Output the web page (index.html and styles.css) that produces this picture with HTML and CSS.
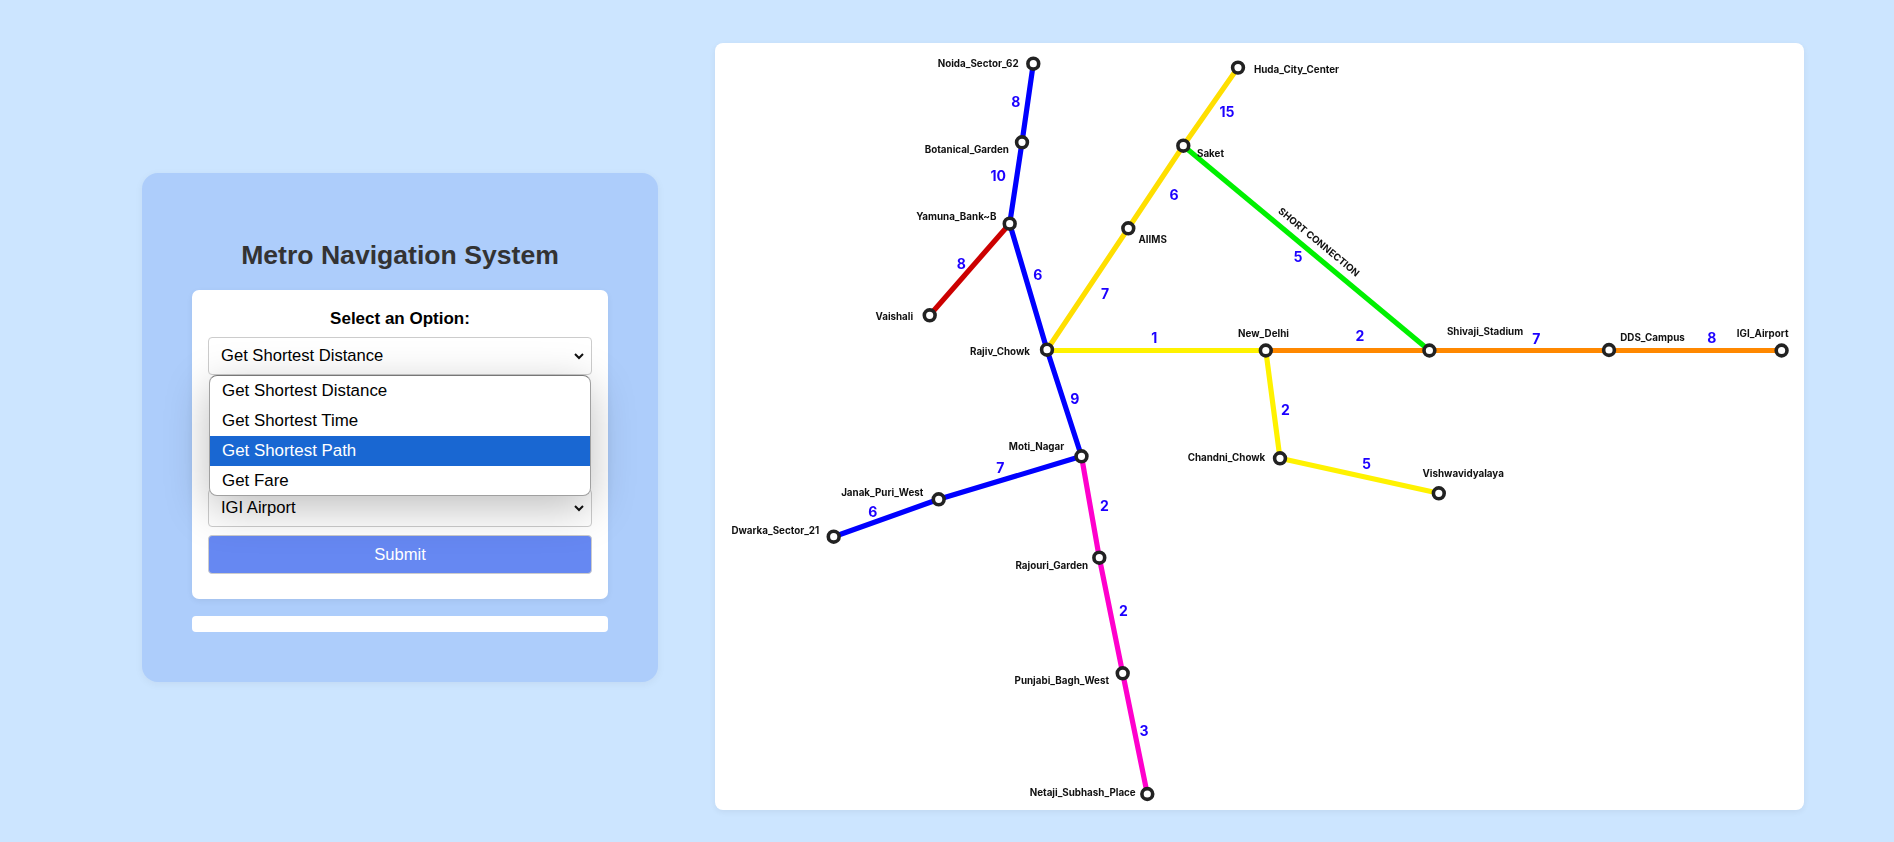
FILE: index.html
```html
<!DOCTYPE html>
<html lang="en">
<head>
    <meta charset="UTF-8">
    <meta name="viewport" content="width=device-width, initial-scale=1.0">
    <title>Metro Navigation System</title>
    <link rel="stylesheet" href="styles.css">
</head>
<body>
    <div class="page">
        <div class="panel">
            <h1>Metro Navigation System</h1>
            <form class="form-card">
                <div class="field">
                    <label for="option">Select an Option:</label>
                    <select id="option" name="option">
                        <option>Get Shortest Distance</option>
                    </select>
                    <ul class="option-menu">
                        <li>Get Shortest Distance</li>
                        <li>Get Shortest Time</li>
                        <li class="active">Get Shortest Path</li>
                        <li>Get Fare</li>
                    </ul>
                </div>
                <!-- these sit behind the open menu -->
                <div class="covered">
                    <label for="source">Source:</label>
                    <select id="source" name="source">
                        <option>Noida Sector 62</option>
                    </select>
                    <label for="destination">Destination:</label>
                </div>
                <select id="destination" name="destination">
                    <option>IGI Airport</option>
                </select>
                <button type="button">Submit</button>
            </form>
            <div class="result"></div>
        </div>

        <div class="map-card">
            <svg class="map" viewBox="715 43 1089 767">
                <!-- lines -->
                <polyline class="line blue" points="1033.3,63.7 1022,142.3 1009.7,223.7 1047,349.7 1081.5,456.3 938.7,499.3 833.7,536.7"/>
                <line class="line red" x1="1009.7" y1="223.7" x2="929.7" y2="315.3"/>
                <polyline class="line gold" points="1047,349.7 1128.3,228.3 1183.3,145.7 1238,67.6"/>
                <line class="line green" x1="1183.3" y1="145.7" x2="1429.4" y2="350.5"/>
                <polyline class="line yellow" points="1047,350.5 1265.8,350.5 1280,458.3 1438.8,493.3"/>
                <line class="line orange" x1="1265.8" y1="350.5" x2="1781.6" y2="350.5"/>
                <polyline class="line magenta" points="1081.5,456.3 1099.3,557.7 1122.7,673.3 1147.3,794"/>

                <!-- stations -->
                <circle class="station" cx="1033.3" cy="63.7" r="5.4"/>
                <circle class="station" cx="1022" cy="142.3" r="5.4"/>
                <circle class="station" cx="1009.7" cy="223.7" r="5.4"/>
                <circle class="station" cx="929.7" cy="315.3" r="5.4"/>
                <circle class="station" cx="1047" cy="349.7" r="5.4"/>
                <circle class="station" cx="1128.3" cy="228.3" r="5.4"/>
                <circle class="station" cx="1183.3" cy="145.7" r="5.4"/>
                <circle class="station" cx="1238" cy="67.6" r="5.4"/>
                <circle class="station" cx="1265.8" cy="350.5" r="5.4"/>
                <circle class="station" cx="1429.4" cy="350.5" r="5.4"/>
                <circle class="station" cx="1609" cy="350" r="5.4"/>
                <circle class="station" cx="1781.6" cy="350.5" r="5.4"/>
                <circle class="station" cx="1280" cy="458.3" r="5.4"/>
                <circle class="station" cx="1438.8" cy="493.3" r="5.4"/>
                <circle class="station" cx="1081.5" cy="456.3" r="5.4"/>
                <circle class="station" cx="938.7" cy="499.3" r="5.4"/>
                <circle class="station" cx="833.7" cy="536.7" r="5.4"/>
                <circle class="station" cx="1099.3" cy="557.7" r="5.4"/>
                <circle class="station" cx="1122.7" cy="673.3" r="5.4"/>
                <circle class="station" cx="1147.3" cy="794" r="5.4"/>

                <!-- station names -->
                <text class="name" x="978.2" y="63.7">Noida_Sector_62</text>
                <text class="name" x="966.8" y="149.3">Botanical_Garden</text>
                <text class="name" x="956.3" y="216">Yamuna_Bank~B</text>
                <text class="name" x="894.3" y="316.7">Vaishali</text>
                <text class="name" x="1000" y="351.7">Rajiv_Chowk</text>
                <text class="name" x="1152.7" y="239.7">AIIMS</text>
                <text class="name" x="1210.5" y="153">Saket</text>
                <text class="name" x="1296.5" y="69">Huda_City_Center</text>
                <text class="name" x="1263.5" y="333.7">New_Delhi</text>
                <text class="name" x="1485" y="331.3">Shivaji_Stadium</text>
                <text class="name" x="1652.5" y="337.7">DDS_Campus</text>
                <text class="name" x="1762.7" y="333.7">IGI_Airport</text>
                <text class="name" x="1226.5" y="457">Chandni_Chowk</text>
                <text class="name" x="1463.2" y="473">Vishwavidyalaya</text>
                <text class="name" x="1036.5" y="446.7">Moti_Nagar</text>
                <text class="name" x="882.3" y="492">Janak_Puri_West</text>
                <text class="name" x="775.3" y="530">Dwarka_Sector_21</text>
                <text class="name" x="1051.8" y="565">Rajouri_Garden</text>
                <text class="name" x="1061.8" y="680.7">Punjabi_Bagh_West</text>
                <text class="name" x="1082.7" y="792.7">Netaji_Subhash_Place</text>
                <text class="note" transform="translate(1319 242) rotate(39.5)">SHORT CONNECTION</text>

                <!-- distances -->
                <text class="dist" x="1015.7" y="101.7">8</text>
                <text class="dist" x="998.3" y="175.3">10</text>
                <text class="dist" x="961.3" y="263">8</text>
                <text class="dist" x="1037.7" y="274">6</text>
                <text class="dist" x="1174" y="194.3">6</text>
                <text class="dist" x="1105" y="293">7</text>
                <text class="dist" x="1154.3" y="337.3">1</text>
                <text class="dist" x="1227" y="111">15</text>
                <text class="dist" x="1298" y="256.7">5</text>
                <text class="dist" x="1360" y="335.7">2</text>
                <text class="dist" x="1536.3" y="338">7</text>
                <text class="dist" x="1711.8" y="337.7">8</text>
                <text class="dist" x="1285.3" y="409.3">2</text>
                <text class="dist" x="1366.5" y="463.7">5</text>
                <text class="dist" x="1074.7" y="398.7">9</text>
                <text class="dist" x="1000.3" y="467">7</text>
                <text class="dist" x="872.7" y="511.7">6</text>
                <text class="dist" x="1104.3" y="505">2</text>
                <text class="dist" x="1123.3" y="610">2</text>
                <text class="dist" x="1144" y="730.3">3</text>
            </svg>
        </div>
    </div>
</body>
</html>
```

FILE: styles.css
```css
body {
    margin: 0;
    font-family: "Liberation Sans", Arial, sans-serif;
    background-color: #cce5ff;
}
.page {
    display: flex;
    align-items: flex-start;
    gap: 57px;
    height: 842px;
    box-sizing: border-box;
    padding: 43px 90px 0 142px;
    overflow: hidden;
}
.panel {
    width: 516px;
    box-sizing: border-box;
    margin-top: 130px;
    padding: 50px;
    background-color: #adcdfb;
    border-radius: 16px;
    box-shadow: 0 2px 8px rgba(0, 0, 0, 0.05);
}
h1 {
    margin: 16px 0 19px;
    font-size: 26.6px;
    line-height: 32px;
    text-align: center;
    color: #333;
}
.form-card {
    padding: 17px 16px 25px;
    background-color: #fff;
    border-radius: 7px;
    box-shadow: 0 2px 6px rgba(0, 0, 0, 0.06);
}
.field {
    position: relative;
    z-index: 1;
}
.covered {
    visibility: hidden;
}
label {
    display: block;
    padding: 3px 0 9px;
    font-size: 17px;
    line-height: 18px;
    font-weight: bold;
    text-align: center;
}
select {
    display: block;
    width: 100%;
    height: 38px;
    margin-bottom: 8px;
    padding: 7px 24px 9px 12px;
    font-family: inherit;
    font-size: 16.6px;
    color: #000;
    background: transparent url("data:image/svg+xml,%3Csvg xmlns='http://www.w3.org/2000/svg' width='10' height='7'%3E%3Cpath d='M1 1l4 4 4-4' fill='none' stroke='%23111' stroke-width='2'/%3E%3C/svg%3E") no-repeat right 7px center;
    border: 1px solid #ccc;
    border-radius: 4px;
    box-sizing: border-box;
    appearance: none;
}
.option-menu {
    position: absolute;
    top: 68px;
    left: 1px;
    right: 1px;
    margin: 0;
    padding: 0;
    height: 121px;
    box-sizing: border-box;
    list-style: none;
    background-color: #fff;
    border: 1px solid #a0a0a0;
    border-top-color: #777;
    border-radius: 8px;
    box-shadow: 0 12px 44px rgba(0, 0, 0, 0.26);
    overflow: hidden;
}
.option-menu li {
    height: 30px;
    padding-left: 12px;
    font-size: 16.9px;
    line-height: 30px;
}
.option-menu .active {
    color: #fff;
    background-color: #1967d2;
}
button {
    display: block;
    width: 100%;
    height: 39px;
    font-family: inherit;
    font-size: 16.6px;
    color: #fff;
    background-color: #6688f2;
    border: 1px solid #ccc;
    border-radius: 4px;
    box-sizing: border-box;
}
.result {
    height: 16px;
    margin-top: 17px;
    background-color: #fff;
    border-radius: 4px;
}
.map-card {
    width: 1089px;
    height: 767px;
    background-color: #fff;
    border-radius: 8px;
    box-shadow: 0 2px 6px rgba(0, 0, 0, 0.06);
}
.map {
    display: block;
    width: 100%;
    height: 100%;
    filter: blur(0.35px);
}
.line {
    fill: none;
    stroke-width: 5.2;
    stroke-linejoin: round;
}
.blue { stroke: #0000ff; }
.red { stroke: #cc0000; }
.gold { stroke: #ffdf00; }
.yellow { stroke: #fff200; }
.green { stroke: #00f000; }
.orange { stroke: #ff8800; }
.magenta { stroke: #ff00cc; }
.station {
    fill: #fff;
    stroke: #222;
    stroke-width: 3.6;
}
.map text {
    font-family: Inter, "Liberation Sans", sans-serif;
    text-anchor: middle;
    dominant-baseline: central;
}
.name {
    font-size: 9.8px;
    font-weight: 700;
    fill: #111;
}
.note {
    font-size: 9.6px;
    font-weight: 700;
    fill: #111;
}
.dist {
    font-size: 14px;
    font-weight: 700;
    fill: #1c00ff;
}
```
